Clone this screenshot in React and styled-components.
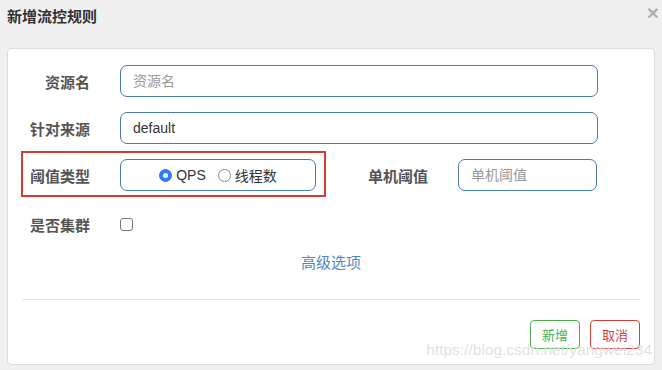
import React from 'react';
import styled, { createGlobalStyle } from 'styled-components';

const GlobalStyle = createGlobalStyle`
    html, body {
        margin: 0;
        padding: 0;
        background: #f0f0f0;
        font-family: "Liberation Sans", "Noto Sans CJK SC", sans-serif;
    }
`;

const Dialog = styled.div`
    position: relative;
    width: 662px;
    height: 370px;
    overflow: hidden;
    background: #f0f0f0;
`;

const Header = styled.div`
    height: 48px;
    box-sizing: border-box;
    display: flex;
    justify-content: space-between;
    align-items: flex-start;
    padding: 7px 3px 0 7px;
`;

const Title = styled.h4`
    margin: 0;
    font-size: 15px;
    line-height: 20px;
    font-weight: bold;
    color: #333;
`;

const Close = styled.span`
    font-size: 21px;
    line-height: 16px;
    font-weight: bold;
    color: #b0b0b0;
    margin-top: -2px;
`;

const Panel = styled.div`
    margin-left: 7px;
    width: 648px;
    height: 317px;
    box-sizing: border-box;
    background: #fff;
    border: 1px solid #dcdcdc;
    border-radius: 4px;
    padding: 16px 14px 0 14px;
`;

const Form = styled.div`
    display: flex;
    flex-direction: column;
    gap: 15px;
`;

const Row = styled.div`
    display: flex;
    align-items: center;
    height: ${p => p.h ?? 32}px;
    margin-top: ${p => p.mt ?? 0}px;
`;

const Label = styled.label`
    width: 60px;
    margin-left: ${p => p.ml ?? 8}px;
    margin-right: 30px;
    text-align: right;
    font-size: 15px;
    font-weight: bold;
    color: #555;
    white-space: nowrap;
`;

const Input = styled.input`
    width: ${p => p.w}px;
    height: 32px;
    box-sizing: border-box;
    border: 1px solid #4a78b0;
    border-radius: 7px;
    padding: 0 12px;
    font-family: inherit;
    font-size: 14px;
    color: #333;
    outline: none;
    &::placeholder {
        color: #999;
    }
`;

const Highlight = styled.div`
    display: flex;
    align-items: center;
    margin: -8px 0 -6px -1px;
    padding: 6px 8px 4px 7px;
    border: 2px solid #d93a33;
`;

const RadioGroup = styled.div`
    width: 196px;
    height: 32px;
    box-sizing: border-box;
    border: 1px solid #4a78b0;
    border-radius: 7px;
    display: flex;
    align-items: center;
    justify-content: center;
    gap: 12px;
    font-size: 14px;
    color: #333;
`;

const RadioItem = styled.span`
    display: flex;
    align-items: center;
    gap: 4px;
`;

const RadioDot = styled.span`
    width: 13px;
    height: 13px;
    box-sizing: border-box;
    border-radius: 50%;
    border: 1px solid ${p => (p.checked ? '#2f7cf0' : '#8a8a8a')};
    background: ${p => (p.checked ? '#2f7cf0' : '#fff')};
    display: flex;
    align-items: center;
    justify-content: center;
    &::after {
        content: '';
        width: 5px;
        height: 5px;
        border-radius: 50%;
        background: ${p => (p.checked ? '#fff' : 'transparent')};
    }
`;

const Checkbox = styled.span`
    width: 13px;
    height: 13px;
    box-sizing: border-box;
    border: 1px solid #777;
    border-radius: 3px;
    background: #fff;
`;

const Advanced = styled.a`
    align-self: center;
    margin-top: -4px;
    font-size: 15px;
    color: #4a86c6;
    text-decoration: none;
`;

const Divider = styled.hr`
    margin: 27px 0 0 0;
    border: none;
    border-top: 1px solid #e2e2e2;
`;

const Footer = styled.div`
    display: flex;
    justify-content: flex-end;
    gap: 10px;
    margin-top: 20px;
`;

const Button = styled.button`
    width: 50px;
    height: 29px;
    box-sizing: border-box;
    background: #fff;
    border: 1px solid ${p => p.color};
    color: ${p => p.color};
    border-radius: 4px;
    font-family: inherit;
    font-size: 13px;
    padding: 0;
`;

const Watermark = styled.span`
    position: absolute;
    right: 10px;
    top: 341px;
    font-size: 15.5px;
    color: rgba(195, 195, 195, 0.5);
    text-shadow: 0 0 1px rgba(255, 255, 255, 0.8);
    pointer-events: none;
`;

const App = () => (
    <Dialog>
        <GlobalStyle />
        <Header>
            <Title>新增流控规则</Title>
            <Close>×</Close>
        </Header>
        <Panel>
            <Form>
                <Row>
                    <Label>资源名</Label>
                    <Input w={478} placeholder="资源名" />
                </Row>
                <Row>
                    <Label>针对来源</Label>
                    <Input w={478} defaultValue="default" />
                </Row>
                <Row>
                    <Highlight>
                        <Label ml={0}>阈值类型</Label>
                        <RadioGroup>
                            <RadioItem><RadioDot checked />QPS</RadioItem>
                            <RadioItem><RadioDot />线程数</RadioItem>
                        </RadioGroup>
                    </Highlight>
                    <Label ml={42}>单机阈值</Label>
                    <Input w={139} placeholder="单机阈值" />
                </Row>
                <Row mt={2}>
                    <Label>是否集群</Label>
                    <Checkbox />
                </Row>
                <Advanced href="#">高级选项</Advanced>
            </Form>
            <Divider />
            <Footer>
                <Button color="#4cae4c">新增</Button>
                <Button color="#d43f3a">取消</Button>
            </Footer>
        </Panel>
        <Watermark>https://blog.csdn.net/yangwei234</Watermark>
    </Dialog>
);

export default App;
